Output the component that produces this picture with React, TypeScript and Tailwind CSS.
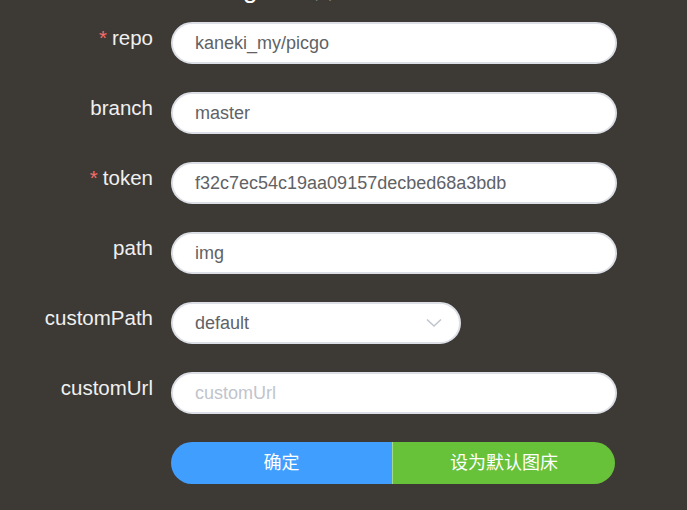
import React from "react";

const font = { fontFamily: '"Liberation Sans", Arial, "Noto Sans CJK SC", sans-serif' };

function Row({ label, required, children }: { label: string; required?: boolean; children: React.ReactNode }) {
  return (
    <div className="flex items-start mb-[28px]">
      <div className="w-[153px] shrink-0 text-right text-[20.5px] leading-[20px] pt-[6px] text-[#f0f0f0]">
        {required && <span className="text-[#f56c6c] mr-[5px]">*</span>}
        {label}
      </div>
      <div className="ml-[18px]">{children}</div>
    </div>
  );
}

function Input({ value, placeholder, width = 446 }: { value?: string; placeholder?: string; width?: number }) {
  return (
    <div
      className="h-[42px] rounded-full bg-white border-2 border-[#dcdfe6] flex items-center pl-[22px] text-[18px]"
      style={{ width }}
    >
      {value ? (
        <span className="text-[#606266]">{value}</span>
      ) : (
        <span className="text-[#c0c4cc]">{placeholder}</span>
      )}
    </div>
  );
}

export default function App() {
  return (
    <div className="w-[687px] h-[510px] bg-[#3d3a35] overflow-hidden" style={font}>
      <div className="h-[22px] relative">
        <div className="absolute left-[243px] top-[-26px] text-[26px] leading-[30px] text-white whitespace-nowrap">gitee 设置</div>
      </div>
      <Row label="repo" required>
        <Input value="kaneki_my/picgo" />
      </Row>
      <Row label="branch">
        <Input value="master" />
      </Row>
      <Row label="token" required>
        <Input value="f32c7ec54c19aa09157decbed68a3bdb" />
      </Row>
      <Row label="path">
        <Input value="img" />
      </Row>
      <Row label="customPath">
        <div className="relative w-[290px] h-[42px] rounded-full bg-white border-2 border-[#dcdfe6] flex items-center pl-[22px] text-[18px] text-[#606266]">
          default
          <svg className="absolute right-[17px] top-[14px]" width="16" height="10" viewBox="0 0 16 10" fill="none">
            <path d="M1 1.5 L8 8 L15 1.5" stroke="#c0c4cc" strokeWidth="1.5" />
          </svg>
        </div>
      </Row>
      <Row label="customUrl">
        <Input placeholder="customUrl" />
      </Row>
      <div className="flex ml-[171px] mt-[1px] w-[444px] h-[42px] rounded-full overflow-hidden text-[18px] text-white">
        <div className="w-[221px] bg-[#409eff] flex items-center justify-center">确定</div>
        <div className="w-[1px] bg-[#a3d98a]" />
        <div className="flex-1 bg-[#67c23a] flex items-center justify-center">设为默认图床</div>
      </div>
    </div>
  );
}
